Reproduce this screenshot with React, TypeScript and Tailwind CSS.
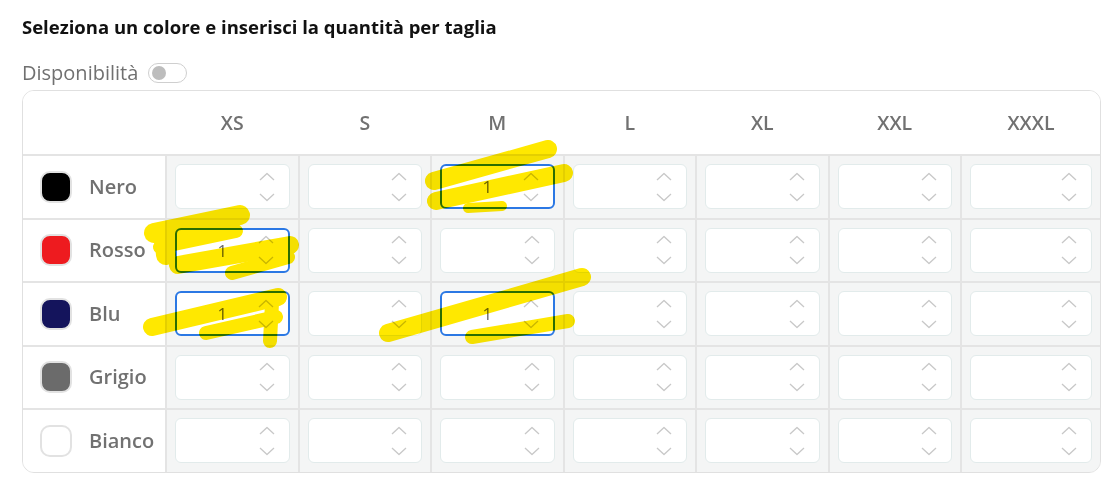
import React from "react";

const sizes = ["XS", "S", "M", "L", "XL", "XXL", "XXXL"];

const colors = [
  { name: "Nero", hex: "#000000", values: { M: "1" } as Record<string, string> },
  { name: "Rosso", hex: "#ee1b1f", values: { XS: "1" } as Record<string, string> },
  { name: "Blu", hex: "#14145c", values: { XS: "1", M: "1" } as Record<string, string> },
  { name: "Grigio", hex: "#6b6b6b", values: {} as Record<string, string> },
  { name: "Bianco", hex: "#ffffff", values: {} as Record<string, string> },
];

const font = { fontFamily: '"Open Sans", "Liberation Sans", sans-serif' };

function Chevron({ up }: { up?: boolean }) {
  return (
    <svg width="16" height="9" viewBox="0 0 16 9" fill="none">
      <polyline
        points={up ? "1,8 8,1.5 15,8" : "1,1 8,7.5 15,1"}
        stroke="#c8c8c8"
        strokeWidth="1.3"
        strokeLinejoin="round"
      />
    </svg>
  );
}

function QtyInput({ value }: { value?: string }) {
  const active = !!value;
  return (
    <div
      className={`relative h-[45px] w-full rounded-md bg-white flex items-center justify-center pr-[20px] ${
        active ? "border-2 border-[#2b78e4]" : "border border-[#e2ebeb]"
      }`}
    >
      <span className="text-[17px] text-[#6a6a6a]">{value}</span>
      <div className="absolute right-[14px] top-0 bottom-0 flex flex-col justify-center gap-[12px]">
        <Chevron up />
        <Chevron />
      </div>
    </div>
  );
}

// evidenziatore giallo passato sopra lo screenshot
function Scribbles() {
  const strokes: [string, number][] = [
    ["M434 181 L548 149", 18],
    ["M436 201 L564 173", 18],
    ["M468 208 L502 206", 10],
    ["M154 233 L240 215", 20],
    ["M160 247 L236 231", 14],
    ["M164 235 L166 255", 20],
    ["M178 265 L290 245", 18],
    ["M232 273 L288 257", 14],
    ["M152 327 L278 297", 18],
    ["M206 333 L276 317", 14],
    ["M272 303 L270 341", 14],
    ["M388 333 L582 277", 18],
    ["M472 337 L568 321", 14],
  ];
  return (
    <svg
      className="pointer-events-none absolute left-0 top-0 mix-blend-multiply"
      width="1117"
      height="495"
      viewBox="0 0 1117 495"
    >
      {strokes.map(([d, w], i) => (
        <path key={i} d={d} stroke="#ffe800" strokeWidth={w} strokeLinecap="round" fill="none" />
      ))}
    </svg>
  );
}

export default function App() {
  return (
    <div className="relative w-[1117px] h-[495px] bg-white overflow-hidden" style={font}>
      <div className="pl-[22px] pt-[14px]">
        <h2 className="text-[18.5px] leading-[26px] font-bold text-[#111]">
          Seleziona un colore e inserisci la quantità per taglia
        </h2>
        <div className="mt-[20px] flex items-center gap-[10px] h-[26px]">
          <span className="text-[20px] text-[#707070]">Disponibilità</span>
          <div className="relative w-[39px] h-[20px] rounded-full border border-[#cfcfcf] bg-white">
            <div className="absolute left-[3px] top-[2px] w-[14px] h-[14px] rounded-full bg-[#bdbdbd]" />
          </div>
        </div>
      </div>

      <div className="ml-[22px] mt-[4px] w-[1079px] rounded-xl border border-[#e0e0e0] overflow-hidden">
        <div className="grid grid-cols-[142px_repeat(6,130.5px)_1fr] gap-x-[2px] h-[63px] bg-white">
          <div />
          {sizes.map((s) => (
            <div key={s} className="flex items-center justify-center text-[19.5px] font-semibold text-[#717171]">
              {s}
            </div>
          ))}
        </div>
        <div className="grid grid-cols-[142px_repeat(6,130.5px)_1fr] auto-rows-[61.5px] gap-[2px] pt-[2px] bg-[#e4e4e4]">
          {colors.map((c) => (
            <React.Fragment key={c.name}>
              <div className="bg-white flex items-center pl-[17px] gap-[17px]">
                <span
                  className="w-[32px] h-[32px] rounded-[10px] border-2 border-[#e2e2e2]"
                  style={{ backgroundColor: c.hex }}
                />
                <span className="text-[20px] font-semibold text-[#717171]">{c.name}</span>
              </div>
              {sizes.map((s) => (
                <div key={s} className="bg-[#f4f5f5] flex items-center px-[8px]">
                  <QtyInput value={c.values[s]} />
                </div>
              ))}
            </React.Fragment>
          ))}
        </div>
      </div>
      <Scribbles />
    </div>
  );
}
